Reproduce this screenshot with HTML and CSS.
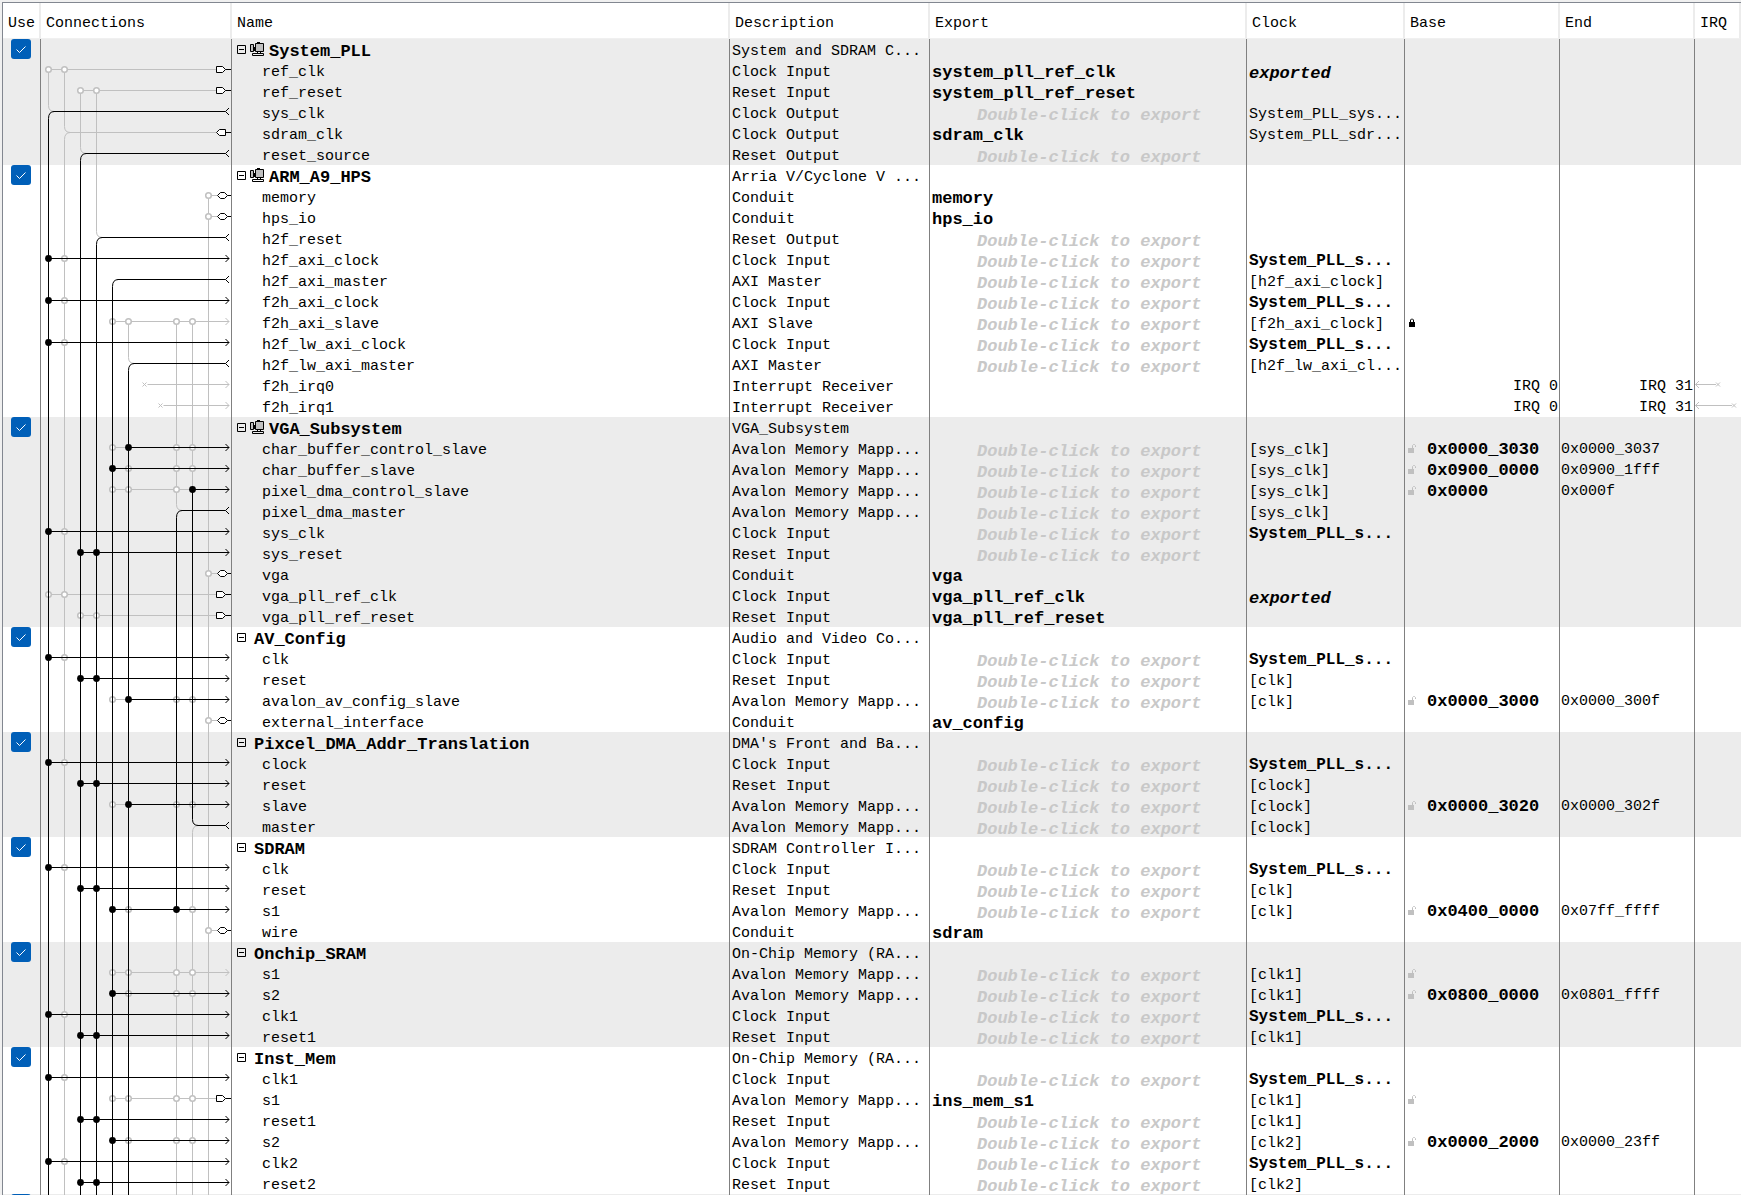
FILE: index.html
```html
<!DOCTYPE html>
<html lang="en">
<head>
<meta charset="utf-8">
<title>System Contents</title>
<link rel="stylesheet" href="styles.css">
</head>
<body>
<main class="panel">
<table class="contents">
<colgroup>
<col class="w-use"><col class="w-conn"><col class="w-name"><col class="w-desc"><col class="w-export"><col class="w-clock"><col class="w-base"><col class="w-end"><col class="w-irq">
</colgroup>
<thead>
<tr><th scope="col">Use</th><th scope="col">Connections</th><th scope="col">Name</th><th scope="col">Description</th><th scope="col">Export</th><th scope="col">Clock</th><th scope="col">Base</th><th scope="col">End</th><th scope="col">IRQ</th></tr>
</thead>
</table>
</main>
<script src="app.js"></script>
</body>
</html>
```

FILE: styles.css
```css
* { box-sizing: border-box; }
html, body { margin: 0; height: 100%; }
body {
  overflow: hidden;
  padding: 2px 0 0 2px;
  background: #f0f0f0;
  color: #000;
  font: 15px/17px "Liberation Mono", monospace;
}
.panel {
  height: 100%;
  overflow: hidden;
  border-top: 1px solid #828790;
  border-left: 1px solid #828790;
  background: #fff;
}
.contents {
  width: 100%;
  table-layout: fixed;
  border-collapse: separate;
  border-spacing: 0;
  white-space: pre;
}
.w-use { width: 38px; }
.w-conn { width: 191px; }
.w-desc { width: 200px; }
.w-export { width: 317px; }
.w-clock { width: 158px; }
.w-base { width: 155px; }
.w-end { width: 135px; }
.w-irq { width: 46px; }

th {
  height: 36px;
  padding: 5px 0 0 5px;
  border-right: 2px solid #ececec;
  border-bottom: 1px solid #f0f0f0;
  font-weight: normal;
  text-align: left;
}
td {
  height: 21px;
  padding: 4px 0 0 2px;
  border-right: 1px solid #808080;
}
td:last-child { border-right: 0; }
tbody:nth-of-type(odd) { background: #ececec; }

.use { padding: 0 0 1px 8px; }
.check {
  display: block;
  appearance: none;
  width: 20px;
  height: 20px;
  margin: 0;
  border-radius: 3px;
  background: #005fb8;
}
.use-box { display: grid; width: 20px; height: 20px; }
.use-box > * { grid-area: 1 / 1; }
.use-box svg { pointer-events: none; }
.conn, .irq { padding: 0; }
svg { display: block; }

.name { padding-left: 30px; }
.module { padding: 0 0 0 5px; }
.module-line { display: flex; align-items: center; height: 21px; }
.toggle {
  width: 9px;
  height: 9px;
  margin-right: 8px;
  padding: 0;
  border: 0;
  background: none;
}
.sub { margin: 0 5px 2px -4px; }
.module strong { padding-top: 4px; font-size: 17px; line-height: 17px; }
.strong { font-size: 17px; font-weight: bold; }
.clock { font-size: 16px; font-weight: bold; }
.hint, .exported {
  padding: 6px 0 0 2px;
  font-size: 17px;
  line-height: 15px;
  font-weight: bold;
  font-style: italic;
}
.hint { padding-left: 47px; color: #c8c8c8; }
.base { padding: 0 0 0 3px; }
.end { padding: 3px 0 1px 1px; }
.base-line { display: flex; align-items: center; height: 21px; }
.base-line svg { margin-right: 10px; }
.base-line strong { padding-top: 2px; font-size: 17px; }
.irq-no { padding: 3px 1px 1px 0; text-align: right; }
```

FILE: app.js
```js
// Each port: name, kind, description, export ('?' = hint), clock, base, end, wiring
// Wiring: lanes with a filled node, lanes with an open node.
const CI = 'Clock Input', RI = 'Reset Input', RO = 'Reset Output', CO = 'Clock Output';
const MM = 'Avalon Memory Mapp...', SYS = '*System_PLL_s...';
const CLK = [[0], [1]], RST = [[2, 3], []];
const modules = [
  { name: 'System_PLL', sub: true, desc: 'System and SDRAM C...', ports: [
    ['ref_clk', 'tag', CI, 'system_pll_ref_clk', 'exported', '', '', [[], [0, 1]]],
    ['ref_reset', 'tag', RI, 'system_pll_ref_reset', '', '', '', [[], [2, 3]]],
    ['sys_clk', 'out', CO, '?', 'System_PLL_sys...', '', '', 0],
    ['sdram_clk', 'tagout', CO, 'sdram_clk', 'System_PLL_sdr...', '', '', 1],
    ['reset_source', 'out', RO, '?', '', '', '', 2]] },
  { name: 'ARM_A9_HPS', sub: true, desc: 'Arria V/Cyclone V ...', ports: [
    ['memory', 'conduit', 'Conduit', 'memory', '', '', '', [[], [10]]],
    ['hps_io', 'conduit', 'Conduit', 'hps_io', '', '', '', [[], [10]]],
    ['h2f_reset', 'out', RO, '?', '', '', '', 3],
    ['h2f_axi_clock', 'in', CI, '?', SYS, '', '', CLK],
    ['h2f_axi_master', 'out', 'AXI Master', '?', '[h2f_axi_clock]', '', '', 4],
    ['f2h_axi_clock', 'in', CI, '?', SYS, '', '', CLK],
    ['f2h_axi_slave', 'in', 'AXI Slave', '?', '[f2h_axi_clock]', 'locked', '', [[], [4, 5, 8, 9]]],
    ['h2f_lw_axi_clock', 'in', CI, '?', SYS, '', '', CLK],
    ['h2f_lw_axi_master', 'out', 'AXI Master', '?', '[h2f_lw_axi_cl...', '', '', 5],
    ['f2h_irq0', 'irq', 'Interrupt Receiver', '', '', 'IRQ 0', 'IRQ 31', 6],
    ['f2h_irq1', 'irq', 'Interrupt Receiver', '', '', 'IRQ 0', 'IRQ 31', 7]] },
  { name: 'VGA_Subsystem', sub: true, desc: 'VGA_Subsystem', ports: [
    ['char_buffer_control_slave', 'in', MM, '?', '[sys_clk]', '0x0000_3030', '0x0000_3037', [[5], [4, 8, 9]]],
    ['char_buffer_slave', 'in', MM, '?', '[sys_clk]', '0x0900_0000', '0x0900_1fff', [[4], [5, 8, 9]]],
    ['pixel_dma_control_slave', 'in', MM, '?', '[sys_clk]', '0x0000', '0x000f', [[9], [4, 5, 8]]],
    ['pixel_dma_master', 'out', MM, '?', '[sys_clk]', '', '', 8],
    ['sys_clk', 'in', CI, '?', SYS, '', '', CLK],
    ['sys_reset', 'in', RI, '?', '', '', '', RST],
    ['vga', 'conduit', 'Conduit', 'vga', '', '', '', [[], [10]]],
    ['vga_pll_ref_clk', 'tag', CI, 'vga_pll_ref_clk', 'exported', '', '', [[], [0, 1]]],
    ['vga_pll_ref_reset', 'tag', RI, 'vga_pll_ref_reset', '', '', '', [[], [2, 3]]]] },
  { name: 'AV_Config', desc: 'Audio and Video Co...', ports: [
    ['clk', 'in', CI, '?', SYS, '', '', CLK],
    ['reset', 'in', RI, '?', '[clk]', '', '', RST],
    ['avalon_av_config_slave', 'in', MM, '?', '[clk]', '0x0000_3000', '0x0000_300f', [[5], [4, 8, 9]]],
    ['external_interface', 'conduit', 'Conduit', 'av_config', '', '', '', [[], [10]]]] },
  { name: 'Pixcel_DMA_Addr_Translation', desc: "DMA's Front and Ba...", ports: [
    ['clock', 'in', CI, '?', SYS, '', '', CLK],
    ['reset', 'in', RI, '?', '[clock]', '', '', RST],
    ['slave', 'in', MM, '?', '[clock]', '0x0000_3020', '0x0000_302f', [[5], [4, 8, 9]]],
    ['master', 'out', MM, '?', '[clock]', '', '', 9]] },
  { name: 'SDRAM', desc: 'SDRAM Controller I...', ports: [
    ['clk', 'in', CI, '?', SYS, '', '', CLK],
    ['reset', 'in', RI, '?', '[clk]', '', '', RST],
    ['s1', 'in', MM, '?', '[clk]', '0x0400_0000', '0x07ff_ffff', [[4, 8], [5, 9]]],
    ['wire', 'conduit', 'Conduit', 'sdram', '', '', '', [[], [10]]]] },
  { name: 'Onchip_SRAM', desc: 'On-Chip Memory (RA...', ports: [
    ['s1', 'in', MM, '?', '[clk1]', 'open', '', [[], [4, 5, 8, 9]]],
    ['s2', 'in', MM, '?', '[clk1]', '0x0800_0000', '0x0801_ffff', [[4], [5, 8, 9]]],
    ['clk1', 'in', CI, '?', SYS, '', '', CLK],
    ['reset1', 'in', RI, '?', '[clk1]', '', '', RST]] },
  { name: 'Inst_Mem', desc: 'On-Chip Memory (RA...', ports: [
    ['clk1', 'in', CI, '?', SYS, '', '', CLK],
    ['s1', 'tag', MM, 'ins_mem_s1', '[clk1]', 'open', '', [[], [4, 5, 8, 9]]],
    ['reset1', 'in', RI, '?', '[clk1]', '', '', RST],
    ['s2', 'in', MM, '?', '[clk2]', '0x0000_2000', '0x0000_23ff', [[4], [5, 8, 9]]],
    ['clk2', 'in', CI, '?', SYS, '', '', CLK],
    ['reset2', 'in', RI, '?', '[clk2]', '', '', RST]] },
  { name: '', desc: '', ports: [] }
];

// Vertical wires: lane, first row, last row, active, bend at start, bend at end
const END = 99;
const wires = [
  [0, 1, 3, 0, 0, 1], [0, 3, END, 1, 1, 0],
  [1, 1, 4, 0, 0, 1], [1, 4, END, 0, 1, 0],
  [2, 2, 5, 0, 0, 1], [2, 5, END, 1, 1, 0],
  [3, 2, 9, 0, 0, 1], [3, 9, END, 1, 1, 0],
  [4, 11, END, 1, 1, 0],
  [5, 13, 15, 0, 0, 1], [5, 15, END, 1, 1, 0],
  [8, 13, 22, 0, 0, 1], [8, 22, 41, 1, 1, 0], [8, 41, END, 0, 0, 0],
  [9, 13, 21, 0, 0, 0], [9, 21, 37, 1, 0, 1], [9, 37, END, 0, 1, 0],
  [10, 7, END, 0, 0, 0]
];
const GREY = '#c0c0c0', BLACK = '#000', MID = 9.5;
const laneX = lane => 7.5 + 16 * lane;
const path = (d, color, fill = 'none') => `<path d="${d}" stroke="${color}" fill="${fill}"/>`;

function connections(row, port) {
  const under = [], open = [], over = [], top = [];
  const line = (d, active) => (active ? over : under).push(path(d, active ? BLACK : GREY));
  for (const [lane, a, b, active, bendA, bendB] of wires) {
    if (row < a || row > b) continue;
    const x = laneX(lane);
    if (row === a) line(bendA ? `M${x + 6} ${MID}Q${x} ${MID} ${x} ${MID + 7}V21` : `M${x} ${MID}V21`, active);
    else if (row === b) line(bendB ? `M${x} 0V${MID - 6}Q${x} ${MID} ${x + 6} ${MID}` : `M${x} 0V${MID}`, active);
    else line(`M${x} 0V21`, active);
  }
  if (port) {
    const kind = port[1], w = port[7];
    if (kind === 'irq') {
      const x = laneX(w);
      line(`M${x - 2} 7.5l4 4m0 -4l-4 4M${x + 3} ${MID}H188M184.5 6l3.5 3.5l-3.5 3.5`, false);
    } else if (kind === 'out') {
      line(`M${laneX(w) + 5} ${MID}H184.5M188 6l-3.5 3.5l3.5 3.5`, true);
    } else if (kind === 'tagout') {
      line(`M${laneX(w) + 5} ${MID}H175`, false);
      top.push(path('M175.5 9.5l3 -3h6v6h-6zM184.5 9.5H190', BLACK, '#fff'));
    } else {
      const [filled, hollow] = w;
      const first = Math.min(...filled, ...hollow);
      const end = kind === 'in' ? 188 : kind === 'tag' ? 175 : 176;
      line(`M${laneX(first)} ${MID}H${end}`, false);
      if (filled.length) line(`M${laneX(Math.min(...filled))} ${MID}H188`, true);
      if (kind === 'in') line('M184.5 6l3.5 3.5l-3.5 3.5', filled.length > 0);
      if (kind === 'tag') top.push(path('M175.5 6.5h6l3 3l-3 3h-6zM184.5 9.5H190', BLACK, '#fff'));
      if (kind === 'conduit') top.push(path('M176.5 9.5l3 -3h4l3 3l-3 3h-4zM186.5 9.5H190', BLACK, '#fff'));
      for (const l of hollow) open.push(`<circle cx="${laneX(l)}" cy="${MID}" r="2.8" fill="#fff" stroke="${GREY}" stroke-width="1.5"/>`);
      for (const l of filled) top.push(`<circle cx="${laneX(l)}" cy="${MID}" r="3.4" fill="${BLACK}"/>`);
    }
  }
  return `<svg width="190" height="21" viewBox="0 0 190 21" aria-hidden="true">${[...under, ...open, ...over, ...top].join('')}</svg>`;
}

const lockClosed = '<svg width="8" height="9" viewBox="0 0 8 9" aria-hidden="true"><path d="M1 4h6v5H1z"/><path d="M2.500 4V2l1-1h1l1 1V4" fill="none" stroke="#000"/></svg>';
const lockOpen = '<svg width="9" height="9" viewBox="0 0 9 9" aria-hidden="true"><path d="M0 4h6v5H0z" fill="#c0c0c0"/><path d="M4.500 4V1.500l1-1h1l1 1V3" fill="none" stroke="#c0c0c0"/></svg>';
const subIcon = '<svg class="sub" width="14" height="14" viewBox="0 0 14 14" aria-hidden="true"><path d="M.5 2.500h3v7h-3zM5.500 1.500h8v8h-8z" fill="#c0c0c0" stroke="#000"/><path d="M7 .5h3M4.500 5v4M7.500 9.500v2M2.500 11.500h11v2h-11zM10.500 9.500v2" fill="none" stroke="#000"/></svg>';

function baseCell(base, end) {
  if (base.startsWith('IRQ')) return `<td class="irq-no">${base}</td><td class="irq-no">${end}</td>`;
  let inner = '';
  if (base === 'locked') inner = lockClosed;
  else if (base === 'open') inner = lockOpen;
  else if (base) inner = `${lockOpen}<strong>${base}</strong>`;
  return `<td class="base"><div class="base-line">${inner}</div></td><td class="end">${end}</td>`;
}

let row = 0, html = '';
for (const m of modules) {
  html += `<tbody><tr><td class="use"><div class="use-box"><input class="check" type="checkbox" checked aria-label="Use ${m.name}"><svg width="20" height="20" viewBox="0 0 20 20" aria-hidden="true"><path d="M5.500 10.500l3 3l6 -6" fill="none" stroke="#fff"/></svg></div></td>`
    + `<td class="conn">${connections(row++)}</td>`
    + `<td class="module"><div class="module-line"><button class="toggle" aria-label="Collapse ${m.name}"><svg width="9" height="9" viewBox="0 0 9 9"><path d="M.5 .5h8v8h-8zM2 4.500h5" fill="none" stroke="#000"/></svg></button>${m.sub ? subIcon : ''}<strong>${m.name}</strong></div></td>`
    + `<td>${m.desc}</td><td></td><td></td>${baseCell('', '')}<td class="irq"></td></tr>`;
  for (const p of m.ports) {
    const [name, kind, desc, exp, clock, base, end] = p;
    const expCell = exp === '?' ? '<td class="hint">Double-click to export</td>' : `<td class="strong">${exp}</td>`;
    const clockCell = clock === 'exported' ? '<td class="exported">exported</td>'
      : clock[0] === '*' ? `<td class="clock">${clock.slice(1)}</td>` : `<td>${clock}</td>`;
    const reach = kind === 'irq' ? 23 + 16 * (p[7] - 6) : 0;
    const irq = reach ? `<svg width="46" height="21" viewBox="0 0 46 21" aria-hidden="true">${path(`M4 6L.5 9.500l3.500 3.500M.5 9.500H${reach - 2}M${reach - 2} 7.500l4 4m0 -4l-4 4`, GREY)}</svg>` : '';
    html += `<tr><td class="use"></td><td class="conn">${connections(row++, p)}</td><td class="name">${name}</td><td>${desc}</td>${expCell}${clockCell}${baseCell(base, end)}<td class="irq">${irq}</td></tr>`;
  }
  html += '</tbody>';
}
document.querySelector('.contents').insertAdjacentHTML('beforeend', html);
```
